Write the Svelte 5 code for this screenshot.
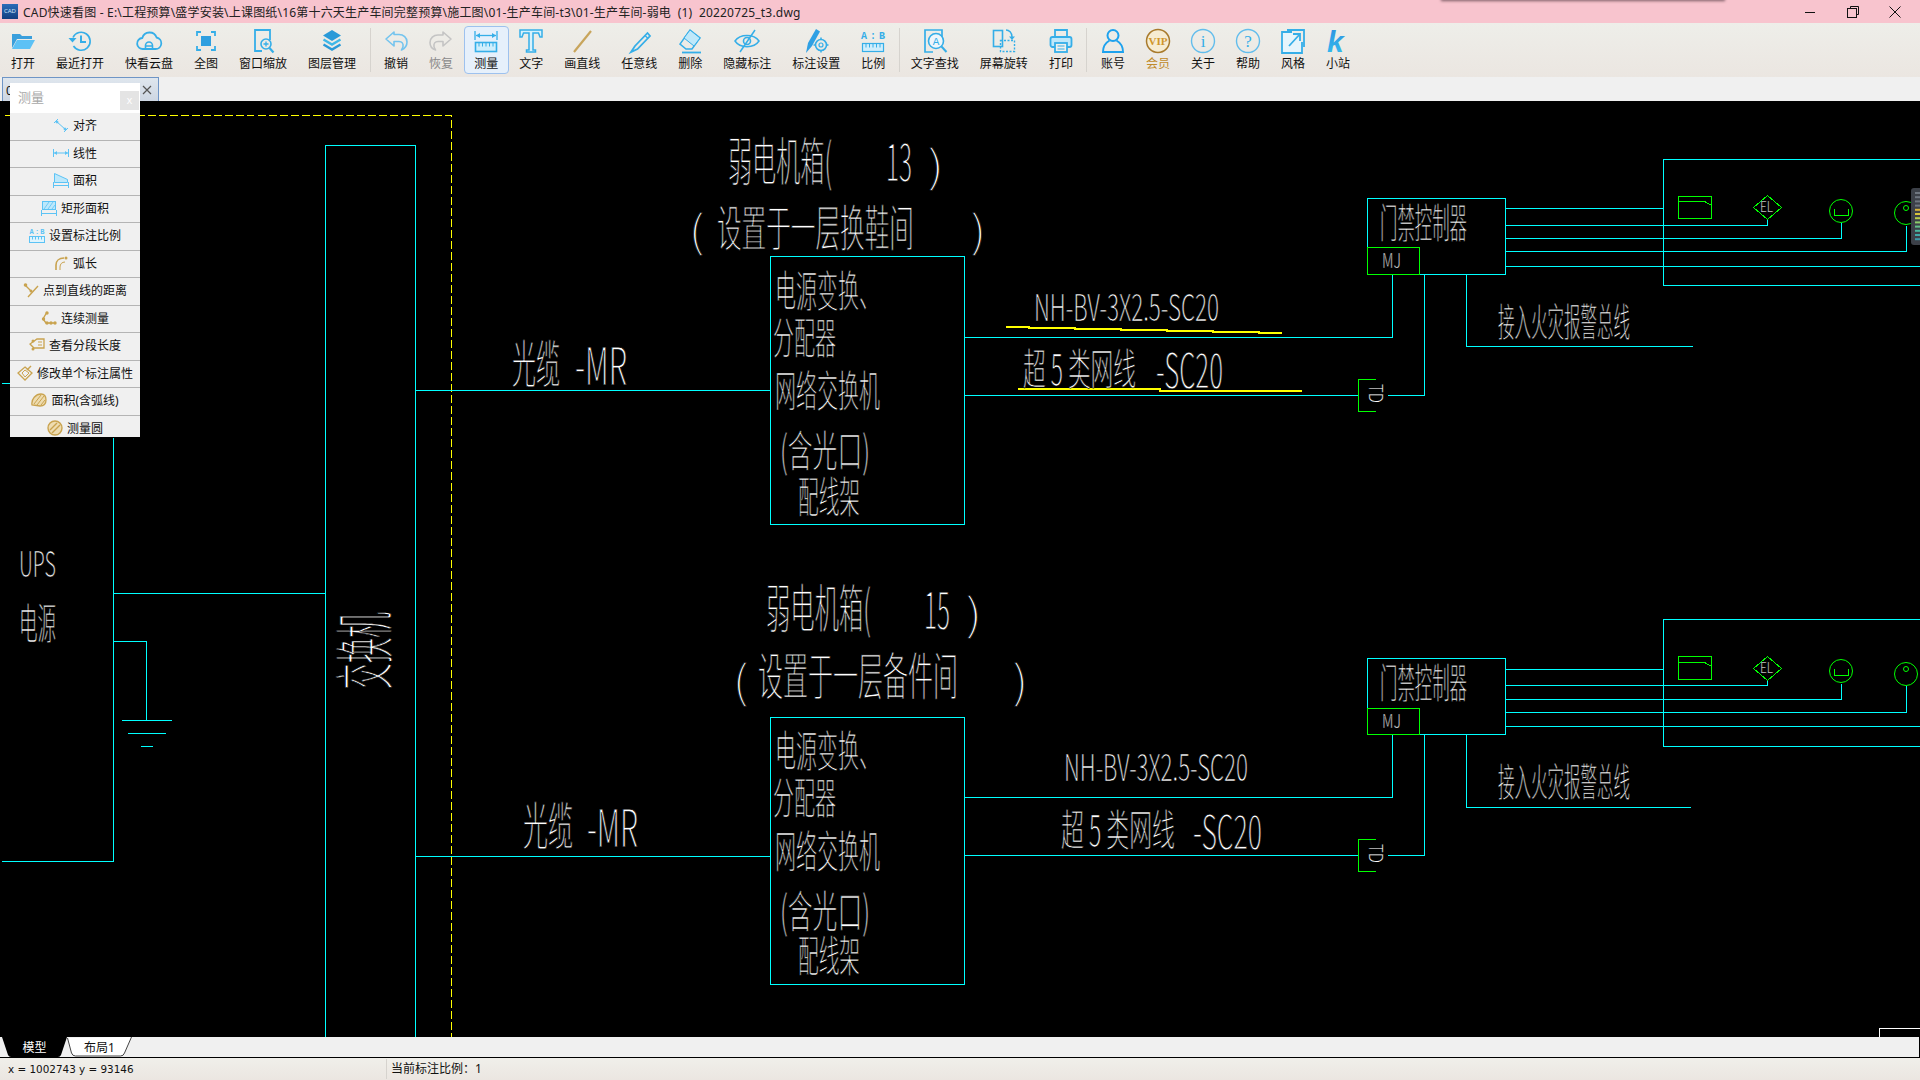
<script>
	// toolbar groups, separated by thin rules
	const blue = "#35aee8";
	const groups = [
		[
			{ key: "open", label: "打开" },
			{ key: "recent", label: "最近打开" },
			{ key: "cloud", label: "快看云盘" },
			{ key: "full", label: "全图" },
			{ key: "zoom", label: "窗口缩放" },
			{ key: "layers", label: "图层管理" }
		],
		[
			{ key: "undo", label: "撤销" },
			{ key: "redo", label: "恢复", off: true },
			{ key: "measure", label: "测量", active: true },
			{ key: "text", label: "文字" },
			{ key: "line", label: "画直线" },
			{ key: "pen", label: "任意线" },
			{ key: "erase", label: "删除" },
			{ key: "hide", label: "隐藏标注" },
			{ key: "markset", label: "标注设置" },
			{ key: "scale", label: "比例" }
		],
		[
			{ key: "find", label: "文字查找" },
			{ key: "rotate", label: "屏幕旋转" },
			{ key: "print", label: "打印" }
		],
		[
			{ key: "user", label: "账号" },
			{ key: "vip", label: "会员", gold: true },
			{ key: "info", label: "关于" },
			{ key: "help", label: "帮助" },
			{ key: "style", label: "风格" },
			{ key: "site", label: "小站" }
		]
	];

	const tools = [
		{ label: "对齐", icon: "align" },
		{ label: "线性", icon: "linear" },
		{ label: "面积", icon: "area" },
		{ label: "矩形面积", icon: "rect" },
		{ label: "设置标注比例", icon: "ratio" },
		{ label: "弧长", icon: "arc" },
		{ label: "点到直线的距离", icon: "dist" },
		{ label: "连续测量", icon: "chain" },
		{ label: "查看分段长度", icon: "seg" },
		{ label: "修改单个标注属性", icon: "edit" },
		{ label: "面积(含弧线)", icon: "blob" },
		{ label: "测量圆", icon: "circle" }
	];

	// single-line CAD text: squeezed into the box measured off the drawing
	function cjk(s, x1, x2, top, bot) {
		const fs = (bot - top) / 0.96;
		return { s, x: x1, y: bot - 0.07 * fs, fs, len: x2 - x1 };
	}
	function latin(s, x1, x2, top, bot) {
		const fs = (bot - top) / 0.72;
		return { s, x: x1, y: bot, fs, len: x2 - x1 };
	}

	const labels = [
		cjk("弱电机箱(", 728, 832, 135, 185),
		latin("13", 886, 912, 143, 181),
		cjk(")", 928, 944, 143, 185),
		cjk("(", 689, 704, 208, 250),
		cjk("设置于一层换鞋间", 717, 914, 202, 249),
		cjk(")", 971, 986, 208, 250),
		cjk("电源变换、", 775, 880, 268, 310),
		cjk("分配器", 773, 836, 316, 357),
		cjk("网络交换机", 775, 880, 368, 410),
		cjk("(含光口)", 780, 870, 428, 470),
		cjk("配线架", 798, 860, 474, 516),
		latin("NH-BV-3X2.5-SC20", 1034, 1219, 294, 321),
		cjk("超 5 类网线", 1023, 1136, 347, 388),
		latin("-SC20", 1156, 1223, 353, 388),
		cjk("光缆", 512, 560, 338, 387),
		latin("-MR", 575, 627, 347, 385),

		cjk("弱电机箱(", 766, 871, 582, 632),
		latin("15", 924, 950, 591, 629),
		cjk(")", 966, 982, 591, 633),
		cjk("(", 733, 748, 658, 701),
		cjk("设置于一层备件间", 758, 958, 650, 699),
		cjk(")", 1013, 1028, 658, 701),
		cjk("电源变换、", 775, 880, 728, 770),
		cjk("分配器", 773, 836, 776, 817),
		cjk("网络交换机", 775, 880, 828, 871),
		cjk("(含光口)", 780, 870, 888, 931),
		cjk("配线架", 798, 860, 933, 975),
		latin("NH-BV-3X2.5-SC20", 1064, 1248, 754, 781),
		cjk("超 5 类网线", 1061, 1175, 808, 849),
		latin("-SC20", 1193, 1262, 815, 849),
		cjk("光缆", 523, 573, 800, 849),
		latin("-MR", 587, 638, 809, 847),

		latin("UPS", 19, 56, 551, 577),
		cjk("电源", 19, 56, 602, 642),

		cjk("门禁控制器", 1380, 1467, 202, 241),
		latin("MJ", 1382, 1401, 253, 268),
		cjk("接入火灾报警总线", 1498, 1630, 302, 339),
		latin("EL", 1760, 1773, 202, 212),
		cjk("门禁控制器", 1380, 1467, 662, 701),
		latin("MJ", 1382, 1401, 714, 728),
		cjk("接入火灾报警总线", 1498, 1630, 762, 799),
		latin("EL", 1760, 1773, 663, 673)
	];

	const cyan = [
		"M325 1037V145H415V1037",
		"M415 390H770M415 856H770",
		"M770 256H964V524H770Z",
		"M770 717H964V984H770Z",
		"M964 337H1392V274M964 395H1358M1387 395H1424V274M1466 274V346H1692",
		"M964 797H1392V734M964 855H1358M1387 855H1424V734M1466 734V807H1690",
		"M1367 198H1505V274H1367Z",
		"M1367 658H1505V734H1367Z",
		"M1505 208H1663M1505 225H1767V218M1505 238H1841V222M1505 251H1906V225M1505 266H1920",
		"M1505 669H1663M1505 685H1767V679M1505 699H1841V683M1505 712H1906V685M1505 726H1920",
		"M1920 159H1663V285H1920M1920 619H1663V746H1920",
		"M1 383H113M113 437V861H1M113 593H325M113 641H146V720M121 720H171M127 733H165M140 746H152"
	];

	const green = [
		"M1367 247H1419V274H1367ZM1367 708H1419V734H1367Z",
		"M1375 379H1358V411H1375M1375 839H1358V871H1375",
		"M1678 196H1711V218H1678ZM1678 201H1704L1711 205",
		"M1678 656H1711V679H1678ZM1678 662H1704L1711 666",
		"M1767 195L1781 207L1767 219L1753 207Z",
		"M1767 656L1781 668L1767 680L1753 668Z",
		"M1834 208V215H1848V208M1834 668V675H1848V668"
	];

	const drawnCircles = [
		[1841, 211, 11.5], [1906, 213, 11.5], [1906, 208, 2.5],
		[1841, 671, 11.5], [1906, 674, 11.5], [1906, 669, 2.5]
	];

	const widgetBars = ["#6f7680", "#6f7680", "#6f7680", "#6f7680", "#d8b23a", "#d8c23a", "#b8cc4a", "#8ccc6a", "#62c08a", "#4ab8a0", "#3fa8a8", "#3f98a8"];
</script>

{#snippet toolIcon(key)}
	<svg class="tool-icon" width="26" height="26" viewBox="0 0 26 26" fill="none" stroke={blue} stroke-width="1.6">
		{#if key === "open"}
			<path fill="#3a9fdc" stroke="none" d="M2 6h8l2 2h10v3H7l-5 9z" />
			<path fill="#5cc1f5" stroke="none" d="M7 12h18l-5 9H2z" />
		{:else if key === "recent"}
			<path d="M6 9.500A9 9 0 1 1 6.500 18" />
			<path fill={blue} stroke="none" d="M1.500 10h8l-4 4.500z" />
			<path stroke-width="2" d="M14 7.500V14h5" />
		{:else if key === "cloud"}
			<path d="M7 21a5.500 5.500 0 0 1-.7-11A7.500 7.500 0 0 1 20.600 9.500 5.800 5.800 0 0 1 19.500 21z" stroke-width="1.800" />
			<path d="M9.500 21v-3.500a3.500 3.500 0 0 1 7 0V21M9.500 18h7" />
		{:else if key === "full"}
			<path stroke-width="1.800" d="M4 8V4h4M18 4h4v4M22 18v4h-4M8 22H4v-4" />
			<rect x="8" y="8" width="10" height="10" fill="#2f9fe0" stroke="none" />
		{:else if key === "zoom"}
			<path stroke-width="1.800" d="M12 23H5V2h15v10" />
			<circle cx="16" cy="16" r="5" />
			<path stroke-width="2.200" d="M19.500 20l4 4.500" />
			<path stroke-width="1.300" d="M13.500 16h5M16 13.500v5" />
		{:else if key === "layers"}
			<path fill="#2a9ad8" stroke="none" d="M13 2l9 5.500-9 5.500-9-5.500z" />
			<path stroke="#3fb8e8" stroke-width="2.400" d="M4.500 11.500l8.500 5 8.500-5" />
			<path stroke="#2a9ad8" stroke-width="2.400" d="M4.500 16.500l8.500 5 8.500-5" />
		{:else if key === "undo"}
			<path stroke="#74c4ee" stroke-linejoin="round" d="M11 4L3 11l8 7v-4.500h5c3 0 4.500 2 4 5-.2 1.400-1 2.500-1.500 3.500 3.500-1.500 5.500-4.500 5.500-8 0-4.500-3.500-7.500-8-7.500h-5z" />
		{:else if key === "redo"}
			<path stroke="#c4c4c4" stroke-linejoin="round" d="M15 4l8 7-8 7v-4.500h-5c-3 0-4.500 2-4 5 .2 1.400 1 2.500 1.500 3.500C4 21 2 18 2 14.500 2 10 5.500 7 10 7h5z" />
		{:else if key === "measure"}
			<path stroke-width="1.300" d="M2 3v9M24 3v9" />
			<path stroke-width="1.300" d="M3 7.500h20" />
			<path fill={blue} stroke="none" d="M3 7.500l4-2.500v5zM23 7.500l-4-2.500v5z" />
			<rect x="2.500" y="14.500" width="21" height="9" fill="#cfeefc" />
			<path stroke-width="1" d="M6 14.500v4M9.500 14.500v4M13 14.500v4M16.500 14.500v4M20 14.500v4" />
		{:else if key === "text"}
			<path fill="#d8f2fc" stroke-width="1.500" d="M2 2h22v7h-2l-1.500-4H15v17h2.500v2h-9v-2H11V5H5.500L4 9H2z" />
		{:else if key === "line"}
			<path stroke="#c8a55c" stroke-width="2.200" d="M5 24L22 3" />
		{:else if key === "pen"}
			<path stroke-width="1.800" d="M9 18l-4 6 6.500-3L24 8l-2.500-3z" />
			<path stroke-width="1.300" d="M19 7.500l3 3" />
		{:else if key === "erase"}
			<path stroke-width="1.500" d="M13 2l10 8-8 11H9l-6-5z" />
			<path fill="#bfe8fa" stroke-width="1" d="M13 2l10 8-6 8-10-8z" />
			<path stroke-width="1.800" d="M5 24.500h19" />
		{:else if key === "hide"}
			<path stroke-width="1.500" d="M1 13c5-7.500 19-7.500 24 0-5 7.500-19 7.500-24 0z" />
			<circle cx="13" cy="13" r="3.500" />
			<path stroke-width="1.500" d="M21 2L6 24" />
		{:else if key === "markset"}
			<path fill="#2fa0e4" stroke="none" d="M3 25l2-10L13 1l4 2.500L9 18z" />
			<circle cx="18" cy="17" r="5.500" stroke-width="1.600" />
			<circle cx="18" cy="17" r="2" stroke-width="1.200" />
			<path stroke-width="1.500" d="M18 9.500v2M18 22.500v2M10.500 17h2M23.500 17h2" />
		{:else if key === "scale"}
			<text class="glyph" x="13" y="11" text-anchor="middle" font-size="10" font-weight="700" fill={blue} stroke="none" textLength="24" lengthAdjust="spacing">A:B</text>
			<rect x="2.500" y="15.500" width="21" height="8" fill="#cfeefc" stroke-width="1.200" />
			<path stroke-width="1" d="M6 15.500v4M9.500 15.500v4M13 15.500v4M16.500 15.500v4M20 15.500v4" />
		{:else if key === "find"}
			<path stroke-width="1.700" d="M11 24H3V2h17v7" />
			<circle cx="14" cy="13" r="7.500" fill="#eef6fb" />
			<path stroke-width="2" d="M19.500 18.500l5 5.500" />
			<text class="glyph" x="14" y="17" text-anchor="middle" font-size="11" fill={blue} stroke="none">A</text>
		{:else if key === "rotate"}
			<rect x="2.500" y="2.500" width="9" height="16" stroke-width="1.600" />
			<rect x="9.500" y="12.500" width="14" height="11" stroke-width="1.400" stroke-dasharray="2 1.500" />
			<path stroke-width="1.500" d="M15 2c3 0 6 2.500 6 7" />
			<path fill={blue} stroke="none" d="M18 8.500h6L21 12z" />
		{:else if key === "print"}
			<path stroke-width="1.800" d="M7 9V2h12v7" />
			<rect x="2.500" y="9" width="21" height="10" rx="2" fill="#bfe8fa" stroke-width="1.800" />
			<rect x="7" y="15" width="12" height="9" fill="#f0f0ec" stroke-width="1.800" />
			<path stroke-width="1.200" d="M9.500 18h7M9.500 21h7" />
		{:else if key === "user"}
			<circle cx="13" cy="7.500" r="5.500" stroke="#1ea2ee" stroke-width="2" />
			<path stroke="#1ea2ee" stroke-width="2" d="M9.500 12.500C6 14.500 3 19 3 24h20c0-5-3-9.500-6.500-11.500" />
		{:else if key === "vip"}
			<circle cx="13" cy="13" r="11.500" fill="#f6ecd2" stroke="#a87a2c" stroke-width="1.500" />
			<text class="vip-text" x="13" y="16.500" text-anchor="middle" textLength="19" lengthAdjust="spacingAndGlyphs" font-size="10" font-weight="700" fill="#d0962a" stroke="none">VIP</text>
		{:else if key === "info"}
			<circle cx="13" cy="13" r="11.500" stroke="#62bdec" stroke-width="1.400" />
			<text class="vip-text" x="13" y="19" text-anchor="middle" font-size="17" fill={blue} stroke="none">i</text>
		{:else if key === "help"}
			<circle cx="13" cy="13" r="11.500" stroke="#62bdec" stroke-width="1.400" />
			<text class="vip-text" x="13" y="19" text-anchor="middle" font-size="17" fill={blue} stroke="none">?</text>
		{:else if key === "style"}
			<path stroke-width="1.800" d="M12 4H2v21h20V14" fill="#e6f5fc" />
			<path stroke-width="1.800" d="M7 2h17v17" />
			<path stroke-width="1.800" d="M9 18L20 6M13 6h7v7" />
		{:else if key === "site"}
			<defs>
				<linearGradient id="kfill" x1="0" y1="0" x2="0" y2="1">
					<stop offset="0" stop-color="#2f8fe0" />
					<stop offset="1" stop-color="#35c0ee" />
				</linearGradient>
			</defs>
			<text class="k-text" x="2" y="24" font-size="30" font-weight="700" font-style="italic" fill="url(#kfill)" stroke="none">k</text>
		{/if}
	</svg>
{/snippet}

{#snippet rowIcon(key)}
	{@const sky = "#5cc3f5"}
	{@const gold = "#c9a34f"}
	<svg class="row-icon" width="16" height="16" viewBox="0 0 16 16" fill="none" stroke={sky} stroke-width="1">
		{#if key === "align"}
			<path d="M3 4l10 9M1 6l4-4M11 15l4-4" />
			<circle cx="4" cy="5" r="1" fill={sky} /><circle cx="12" cy="12" r="1" fill={sky} />
		{:else if key === "linear"}
			<path d="M.5 4v8M15.500 4v8M1 8h14" />
			<path fill={sky} stroke="none" d="M1 8l3-2v4zM15 8l-3-2v4z" />
		{:else if key === "area"}
			<path fill="#bde8fb" d="M1.500 1.500l13 6v3h-13z" />
			<path d="M.5 10v6M15.500 10v6M1 13.500h14" />
		{:else if key === "rect"}
			<rect x="1.500" y="1.500" width="13" height="8" fill="#bde8fb" />
			<path d="M3 9l5-7M7 9l5-7M11 9l3-4" stroke-width=".8" />
			<path d="M.5 10v6M15.500 10v6M1 13.500h14" />
		{:else if key === "ratio"}
			<text class="glyph" x="8" y="7" text-anchor="middle" font-size="7" font-weight="700" fill={sky} stroke="none" textLength="15" lengthAdjust="spacing">A:B</text>
			<rect x=".5" y="9.500" width="15" height="6" fill="#dff4fd" />
			<path d="M3.500 9.500v3M6.500 9.500v3M9.500 9.500v3M12.500 9.500v3" />
		{:else if key === "arc"}
			<path stroke={gold} stroke-width="1.600" d="M3 15V10c0-4 3-7 8-7" />
			<path stroke={gold} stroke-width="1" d="M7 15v-3c0-3 2-5 5-5" />
			<circle cx="13" cy="3" r="1.500" fill={gold} stroke="none" />
		{:else if key === "dist"}
			<path stroke={gold} stroke-width="1.400" d="M2 3l6 6M15 4L5 15" />
			<circle cx="2.500" cy="3" r="1.800" fill={gold} stroke="none" />
			<circle cx="8" cy="9" r="1.500" fill={gold} stroke="none" />
		{:else if key === "chain"}
			<path stroke={gold} stroke-width="1.400" d="M6 2L2 9l3 4h9" />
			<circle cx="6" cy="3" r="1.700" fill={gold} stroke="none" />
			<circle cx="2.500" cy="9" r="1.700" fill={gold} stroke="none" />
			<circle cx="6" cy="13" r="1.700" fill={gold} stroke="none" />
			<circle cx="10" cy="13" r="1.700" fill={gold} stroke="none" />
			<circle cx="14" cy="13" r="1.700" fill={gold} stroke="none" />
		{:else if key === "seg"}
			<path stroke={gold} stroke-width="1.300" d="M8 2h7v9H5L1 7z" />
			<path stroke={gold} d="M9 5h4M9 8h4" />
			<circle cx="4" cy="4" r="1.500" fill={gold} stroke="none" />
			<circle cx="4" cy="12" r="1.500" fill={gold} stroke="none" />
		{:else if key === "edit"}
			<path stroke={gold} stroke-width="1.300" d="M8 2l7 6-7 7-7-7z" />
			<path stroke={gold} d="M5 8l3-3 4 3-4 4z" />
			<path stroke={gold} stroke-width="1.500" d="M10 5l4-4" />
		{:else if key === "blob"}
			<path fill="#eedcb0" stroke={gold} stroke-width="1.300" d="M1 13c-1-6 4-11 9-11 4 0 5 3 5 6 0 4-2 6-6 6z" />
			<path stroke={gold} d="M3 12l7-9M6 13l7-9M10 13l4-5" />
		{:else if key === "circle"}
			<circle cx="8" cy="8" r="7" fill="#eedcb0" stroke={gold} stroke-width="1.400" />
			<path stroke={gold} stroke-width="1.400" d="M3 10l7-7M5 13l8-8" />
		{/if}
	</svg>
{/snippet}

<div class="window">
	<div class="titlebar">
		<span class="app-icon">CAD</span>
		<span class="title">CAD快速看图 - E:\工程预算\盛学安装\上课图纸\16第十六天生产车间完整预算\施工图\01-生产车间-t3\01-生产车间-弱电  (1)  20220725_t3.dwg</span>
		<div class="ghost-shadow"></div>
		<div class="win-controls">
			<svg width="12" height="12" viewBox="0 0 12 12"><path d="M1 6.500h10" stroke="#111" stroke-width="1" /></svg>
			<svg width="12" height="12" viewBox="0 0 12 12" fill="none" stroke="#111"><path d="M3.500 2.500v-2h8v8h-2" /><rect x=".5" y="2.500" width="9" height="9" /></svg>
			<svg width="12" height="12" viewBox="0 0 12 12"><path d="M.5.500l11 11M11.500.500l-11 11" stroke="#111" /></svg>
		</div>
	</div>

	<div class="toolbar">
		{#each groups as group, i}
			{#if i > 0}<span class="sep" class:tight={i === 2}></span>{/if}
			{#each group as item}
				<div class="tool" class:active={item.active} class:off={item.off} class:gold={item.gold}>
					{@render toolIcon(item.key)}
					<span>{item.label}</span>
				</div>
			{/each}
		{/each}
	</div>

	<div class="doc-tabs">
		<div class="doc-tab">
			<span>01-生产车间-弱电</span>
			<svg width="12" height="12" viewBox="0 0 12 12"><path d="M2 2l8 8M10 2l-8 8" stroke="#555" stroke-width="1.200" /></svg>
		</div>
	</div>

	<div class="canvas">
		<svg width="1920" height="936" viewBox="0 101 1920 936" class="drawing">
			<g transform="translate(.5 .5)" fill="none" shape-rendering="crispEdges">
				<path d="M4 115H451V1037" stroke="#ffff00" stroke-dasharray="8 3" />
				{#each cyan as d}
					<path {d} stroke="#00ffff" />
				{/each}
				{#each green as d}
					<path {d} stroke="#00ff00" />
				{/each}
				<path d="M1005 326H1028V327H1074V328H1120V329H1166V330H1212V331H1258V332H1281" stroke="#ffff00" stroke-width="2" />
				<path d="M1017 388H1159V390H1301" stroke="#ffff00" stroke-width="2" />
				<path d="M1879 1037V1028H1920" stroke="#fff" />
			</g>
			{#each drawnCircles as [cx, cy, r]}
				<circle {cx} {cy} {r} fill="none" stroke="#00ff00" />
			{/each}

			<g class="cad-text">
				{#each labels as l}
					<text x={l.x} y={l.y} font-size={l.fs} stroke-width={l.fs * 0.016} textLength={l.len} lengthAdjust="spacingAndGlyphs">{l.s}</text>
				{/each}
				<text transform="translate(387 689) rotate(-90)" font-size="60" stroke-width="0.9" textLength="77" lengthAdjust="spacingAndGlyphs">交换机</text>
				<text transform="translate(1369 384) rotate(90)" font-size="19" stroke-width="0.2" textLength="19" lengthAdjust="spacingAndGlyphs">TD</text>
				<text transform="translate(1369 844) rotate(90)" font-size="19" stroke-width="0.2" textLength="19" lengthAdjust="spacingAndGlyphs">TD</text>
			</g>

			<!-- floating side widget at the right edge -->
			<rect x="1911" y="188" width="14" height="57" rx="3" fill="#3c4048" />
			{#each widgetBars as color, i}
				<rect x="1915" y={192 + i * 4.200} width="5" height="2" fill={color} />
			{/each}
		</svg>
	</div>

	<div class="sheet-tabs">
		<div class="sheet-tab model">
			<svg width="65" height="20" viewBox="0 0 65 20"><path d="M0 0l6 18q1 2 3 2h47q2 0 3-2l6-18z" fill="#000" /></svg>
			<span>模型</span>
		</div>
		<div class="sheet-tab">
			<svg width="65" height="20" viewBox="0 0 65 20"><path d="M.5 1l4 15q1 3 4 3h45q3 0 4-3l7-16" fill="#fff" stroke="#444" /></svg>
			<span>布局1</span>
		</div>
	</div>

	<div class="statusbar">
		<span class="coords">x = 1002743 y = 93146</span>
		<span class="ratio">当前标注比例：1</span>
	</div>

	<div class="measure-panel">
		<div class="panel-head">
			<span>测量</span>
			<button class="panel-close">x</button>
		</div>
		{#each tools as t}
			<div class="panel-row">
				{@render rowIcon(t.icon)}
				<span>{t.label}</span>
			</div>
		{/each}
	</div>
</div>

<style>
	:global(body) {
		margin: 0;
		background: #000;
	}

	.window {
		position: relative;
		width: 1920px;
		height: 1080px;
		display: flex;
		flex-direction: column;
		overflow: hidden;
		font-family: "Noto Sans", "Noto Sans CJK SC", sans-serif;
		font-size: 12px;
		color: #111;
	}

	.titlebar {
		position: relative;
		height: 23px;
		flex: none;
		display: flex;
		align-items: center;
		background: #f8c4ce;
	}

	.app-icon {
		width: 16px;
		height: 15px;
		margin: 0 5px 0 2px;
		background: linear-gradient(#2a6cb8, #123f80);
		color: #cfe4f8;
		font-size: 6px;
		line-height: 15px;
		text-align: center;
		overflow: hidden;
	}

	.title {
		white-space: pre;
		color: #222;
		letter-spacing: 0.19px;
	}

	/* shadow of a window sitting just above the screen edge */
	.ghost-shadow {
		position: absolute;
		left: 1441px;
		top: -3px;
		width: 284px;
		height: 3px;
		box-shadow: 0 1px 3px #7a5a62;
	}

	.win-controls {
		margin-left: auto;
		width: 116px;
		padding-right: 19px;
		display: flex;
		justify-content: space-between;
		box-sizing: border-box;
	}

	.toolbar {
		height: 54px;
		flex: none;
		box-sizing: border-box;
		padding-left: 0.5px;
		display: flex;
		align-items: center;
		background: linear-gradient(#eeeee9, #ebe6e1);
	}

	.tool {
		height: 48px;
		box-sizing: border-box;
		padding: 1px 9.5px 0;
		border: 1px solid transparent;
		border-radius: 4px;
		display: flex;
		flex-direction: column;
		align-items: center;
		white-space: nowrap;
	}

	.tool span {
		line-height: 17px;
		margin-top: 1px;
	}

	.tool.active {
		background: #e6f0fb;
		border-color: #9dc1ee;
	}

	.tool.off {
		color: #8a8a8a;
	}

	.tool.gold {
		color: #c08a2a;
	}

	/* icons are a touch wider than a two-character label, the label sets the column */
	.tool-icon {
		flex: none;
		margin: 0 -1px;
		overflow: visible;
	}

	.sep {
		width: 1px;
		height: 44px;
		margin: 0 3px;
		background: #d6d3ce;
		flex: none;
	}

	.sep.tight {
		margin-right: 0.6px;
	}

	.glyph {
		font-family: "Liberation Mono", monospace;
	}

	.vip-text {
		font-family: "Liberation Serif", serif;
	}

	.k-text {
		font-family: "Liberation Sans", sans-serif;
	}

	.doc-tabs {
		height: 24px;
		flex: none;
		background: #f0f0f0;
		padding-left: 2px;
	}

	.doc-tab {
		width: 157px;
		height: 24px;
		box-sizing: border-box;
		padding: 0 5px 0 3px;
		display: flex;
		align-items: center;
		justify-content: space-between;
		border: 1px solid #6f95c6;
		border-bottom: none;
		background: linear-gradient(#dfe6ee, #cdd6e2);
	}

	.doc-tab span {
		width: 120px;
		overflow: hidden;
		white-space: nowrap;
	}

	.canvas {
		height: 936px;
		flex: none;
		background: #000;
		overflow: hidden;
	}

	.drawing {
		display: block;
	}

	.cad-text {
		fill: #fff;
		stroke: #000;
		font-family: "Noto Sans CJK SC", "Noto Sans", sans-serif;
		font-weight: 300;
	}

	.sheet-tabs {
		height: 20px;
		flex: none;
		display: flex;
		padding-left: 2px;
		background: #f0f0f0;
		border-right: 1px solid #000;
		border-bottom: 1px solid #000;
	}

	.sheet-tab {
		position: relative;
		width: 65px;
		height: 20px;
		display: flex;
		align-items: center;
		justify-content: center;
		color: #111;
	}

	.sheet-tab svg {
		position: absolute;
		left: 0;
		top: 0;
	}

	.sheet-tab span {
		position: relative;
	}

	.sheet-tab.model {
		color: #fff;
	}

	.statusbar {
		flex: 1;
		display: flex;
		align-items: center;
		background: linear-gradient(#f0efea, #ebe6e1);
	}

	.coords {
		width: 378px;
		padding-left: 8px;
		font-family: "DejaVu Sans", sans-serif;
		font-size: 10.4px;
	}

	.ratio {
		padding-left: 4px;
		border-left: 1px solid #d6d3ce;
		line-height: 20px;
	}

	.measure-panel {
		position: absolute;
		left: 10px;
		top: 83px;
		width: 130px;
		height: 354px;
		overflow: hidden;
		background: #f0f0f0;
	}

	.panel-head {
		height: 30px;
		box-sizing: border-box;
		padding: 0 1px 3px 8px;
		display: flex;
		align-items: center;
		justify-content: space-between;
		background: #fff;
		color: #a8a8a8;
		font-size: 13px;
	}

	.panel-close {
		width: 19px;
		height: 19px;
		margin-top: 7px;
		padding: 0;
		border: none;
		background: #e4e4e4;
		color: #fff;
		font-size: 11px;
		font-family: "Liberation Sans", sans-serif;
	}

	.panel-row {
		height: 27.5px;
		box-sizing: border-box;
		padding-bottom: 2px;
		display: flex;
		align-items: center;
		justify-content: center;
		gap: 4px;
		border-bottom: 1px solid #b4b4b4;
		white-space: nowrap;
	}

	.row-icon {
		flex: none;
	}
</style>
